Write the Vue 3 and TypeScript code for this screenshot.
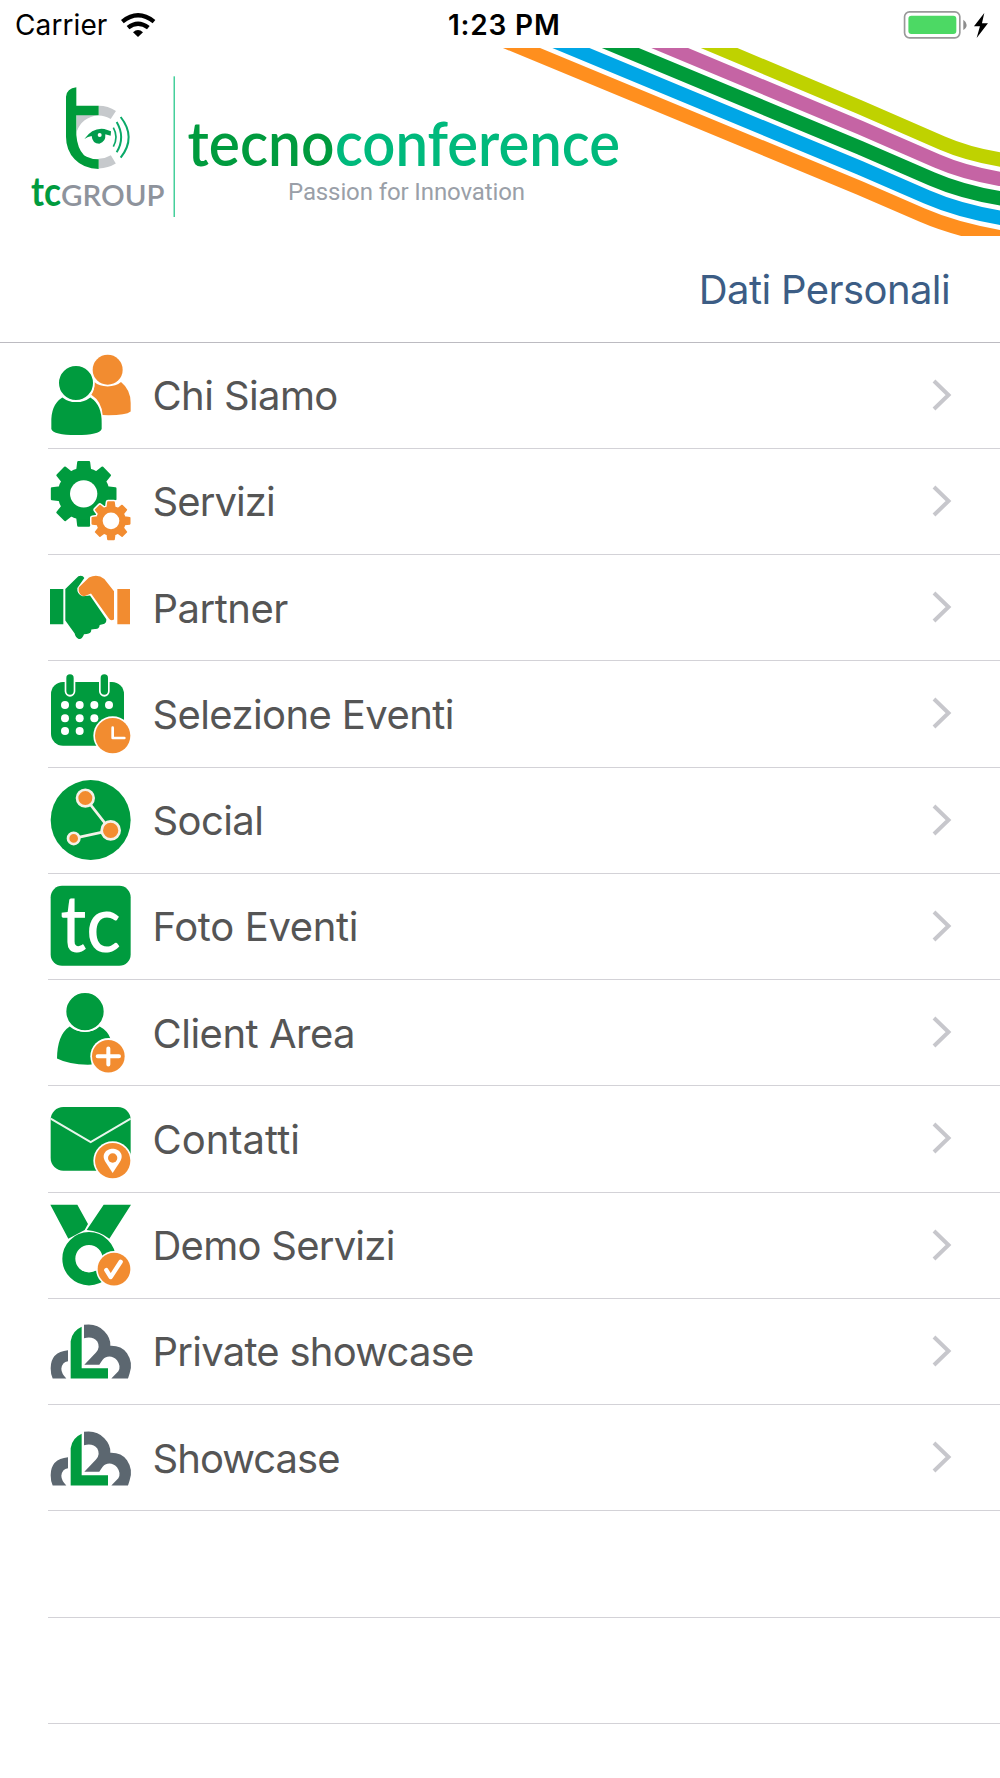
<script setup lang="ts">
interface MenuItem {
  label: string
  icon: string
  box: string
  spacing: number
}

const green = '#009b3e'
const orange = '#f28c30'
const slate = '#5c6770'

const items: MenuItem[] = [
  { label: 'Chi Siamo', icon: 'people', box: '54 6.75 258 318.75', spacing: -0.6 },
  { label: 'Servizi', icon: 'gears', box: '54 325.5 258 318.75', spacing: -0.9 },
  { label: 'Partner', icon: 'hands', box: '54 14.25 258 318.75', spacing: -0.5 },
  { label: 'Selezione Eventi', icon: 'calendar', box: '54 333 258 318.75', spacing: -0.6 },
  { label: 'Social', icon: 'social', box: '54 6.75 258 318.75', spacing: -0.6 },
  { label: 'Foto Eventi', icon: 'tile', box: '54 325.5 258 318.75', spacing: -0.35 },
  { label: 'Client Area', icon: 'client', box: '54 14.25 258 318.75', spacing: -0.5 },
  { label: 'Contatti', icon: 'mail', box: '54 333 258 318.75', spacing: 0 },
  { label: 'Demo Servizi', icon: 'medal', box: '54 6.75 258 318.75', spacing: -0.75 },
  { label: 'Private showcase', icon: 'cloud', box: '54 325.5 258 318.75', spacing: -0.75 },
  { label: 'Showcase', icon: 'cloud', box: '54 325.5 258 318.75', spacing: -0.95 },
]

// Each ribbon runs down to the right, then levels out at the edge.
const ribbons = ['#ff8f1e', '#00a6e6', '#009b3a', '#c564a4', '#bfd200'].map((color, i) => {
  const x0 = 521.5 + 49.4 * i
  const yMid = 188.1 - 20.2 * i
  const entry = (yMid - 48) / (860 - x0)
  const slope = 0.435
  const endSlope = 0.17
  const bend = 922 + 5 * i
  const yBend = yMid + slope * (bend - 860)
  const yEnd = 237.1 - 19.4 * i
  const t = (yEnd - yBend - endSlope * (1000 - bend)) / (slope - endSlope)
  return {
    color,
    d: `M${x0 - 40} ${48 - entry * 40}L860 ${yMid}L${bend} ${yBend}Q${bend + t} ${yBend + slope * t} 1000 ${yEnd}l20 ${20 * endSlope}`,
  }
})

function gear(cx: number, cy: number, outer: number, inner: number, tip: number, root: number): string {
  const points: string[] = []
  for (let i = 0; i < 8; i++) {
    const a = (i * Math.PI) / 4 - Math.PI / 2
    const corners: [number, number][] = [
      [inner, -root],
      [outer, -tip],
      [outer, tip],
      [inner, root],
    ]
    for (const [r, w] of corners) {
      const x = cx + Math.cos(a) * r - Math.sin(a) * w
      const y = cy + Math.sin(a) * r + Math.cos(a) * w
      points.push(`${x.toFixed(1)},${y.toFixed(1)}`)
    }
  }
  return points.join(' ')
}

const bigGear = gear(161, 463, 95, 70, 16, 19)
const smallGear = gear(243, 544, 56, 41, 9, 11)
const dots = [
  [105, 465], [149, 465], [193, 465], [237, 465],
  [105, 505], [149, 505], [193, 505],
  [105, 543], [149, 543],
]
</script>

<template>
  <main class="screen">
    <header class="status">
      <div class="carrier">
        <span>Carrier</span>
        <svg class="wifi" viewBox="362 34 104 76">
          <path d="M366 63Q413 25 461 63" fill="none" stroke="#000" stroke-width="13" />
          <path d="M383 81Q413 57 444 81" fill="none" stroke="#000" stroke-width="13" />
          <path d="M398 95Q413 81 428 95L413 109Z" />
        </svg>
      </div>
      <span class="time">1:23 PM</span>
      <svg class="battery" viewBox="788 28 260 88">
        <rect x="792.500" y="33.500" width="166" height="78" rx="15" fill="none" stroke="#999" stroke-width="5" />
        <rect x="804" y="45" width="144" height="55" rx="9" fill="#4cd964" />
        <path d="M969 57Q979 64 979 73T969 88Z" fill="#8d8d8d" />
        <path d="M1032 37L1001 77H1019L1009 112L1043 68H1025Z" />
      </svg>
    </header>

    <svg class="banner" viewBox="0 48 1000 188">
      <path v-for="r in ribbons" :key="r.color" :d="r.d" fill="none" :stroke="r.color" stroke-width="14.2" />
      <g transform="scale(.333333)">
        <path d="M230 345H296Q245 352 230 395Z" fill="#c6c9cc" />
        <path d="M296 332Q320 332 340 345" fill="none" stroke="#c6c9cc" stroke-width="29" />
        <path d="M296 491Q320 490 340 478" fill="none" stroke="#c6c9cc" stroke-width="29" />
        <path d="M198 290Q200 266 229 262V317H296V346H229V405Q232 445 252 466L260 470Q276 478 296 478V507Q250 506 224 478Q198 450 198 410Z" fill="#009b3a" />
        <path d="M253 417Q278 382 313 387L333 394L332 407L316 403Q318 426 298 431Q277 431 275 408Q264 410 253 417Z" fill="#009b4c" />
        <circle cx="299" cy="405" r="6" fill="#fff" />
        <g fill="none" stroke="#0aa968" stroke-width="5">
          <path d="M340 383Q356 411 340 440" />
          <path d="M350 366Q377 412 350 457" stroke-width="6" />
          <path d="M362 351Q410 412 362 473" stroke-width="6" />
        </g>
        <rect x="520.500" y="229" width="4.500" height="422" fill="#45cf9b" />
      </g>
      <g font-family="Lato, sans-serif">
        <text x="31" y="205.800" font-size="40" font-weight="700" fill="#009b3e" textLength="30" lengthAdjust="spacingAndGlyphs">tc</text>
        <text x="61" y="205.800" font-size="29.500" font-weight="600" fill="#8e939c" textLength="103.500" lengthAdjust="spacingAndGlyphs">GROUP</text>
        <text x="187.500" y="165.500" font-size="62" font-weight="600" fill="#009b3e" textLength="147" lengthAdjust="spacingAndGlyphs">tecno</text>
        <text x="335" y="165.500" font-size="62" font-weight="600" fill="#00b97c" textLength="285" lengthAdjust="spacingAndGlyphs">conference</text>
      </g>
      <text x="288" y="200" font-family="Roboto, sans-serif" font-size="24" fill="#9a9fa8" textLength="237">Passion for Innovation</text>
    </svg>

    <div class="account"><span>Dati Personali</span></div>

    <ul class="menu">
      <li v-for="item in items" :key="item.label" class="row">
        <svg class="icon" :viewBox="item.box">
          <g v-if="item.icon === 'people'">
            <g :fill="orange">
              <path d="M193 127Q208 140 233 140T273 127Q302 150 302 190V215Q286 228 218 226Q215 185 184 165Q195 150 193 127Z" />
              <circle cx="233" cy="90" r="45" />
            </g>
            <g :fill="green">
              <path d="M97 173Q115 187 139 187T181 173Q216 195 215 250V268Q208 286 139 286T64 268V250Q62 195 97 173Z" />
              <circle cx="138" cy="130" r="53.500" stroke="#fff" stroke-width="5" />
            </g>
          </g>
          <g v-else-if="item.icon === 'gears'">
            <polygon :points="bigGear" :fill="green" :stroke="green" stroke-width="7" stroke-linejoin="round" />
            <circle cx="161" cy="463" r="78" :fill="green" />
            <circle cx="161" cy="463" r="41" fill="#fff" />
            <polygon :points="smallGear" fill="#fff" stroke="#fff" stroke-width="14" stroke-linejoin="round" />
            <polygon :points="smallGear" :fill="orange" :stroke="orange" stroke-width="5" stroke-linejoin="round" />
            <circle cx="243" cy="544" r="25" fill="#fff" />
          </g>
          <g v-else-if="item.icon === 'hands'">
            <path d="M60 116H100V222H60ZM106 116L145 78Q158 74 163 83L142 113Q140 131 158 138L180 136L229 207Q230 220 218 222L209 224Q208 237 195 236L184 238Q184 251 170 251L162 252Q156 269 146 266Q136 262 134 250L106 211Z" :fill="green" />
            <path d="M262 116H300V222H262ZM146 112L177 82Q202 70 223 86L252 123V208Q242 214 236 204L183 130L163 138Q150 136 146 122Z" :fill="orange" />
          </g>
          <g v-else-if="item.icon === 'calendar'">
            <rect x="63" y="396" width="219" height="191" rx="36" :fill="green" />
            <g stroke-linecap="round" stroke-width="32" stroke="#fff">
              <path d="M120 384V424M223 384V424" />
              <path d="M120 384V423M223 384V423" :stroke="green" stroke-width="22" />
            </g>
            <circle v-for="([x, y], i) in dots" :key="i" :cx="x" :cy="y" r="12" fill="#fff" />
            <circle cx="248" cy="557" r="58" fill="#fff" />
            <circle cx="248" cy="557" r="53" :fill="orange" />
            <path d="M248 533V564H283" fill="none" stroke="#fff" stroke-width="8" stroke-linecap="round" stroke-linejoin="round" />
          </g>
          <g v-else-if="item.icon === 'social'" stroke="#f4f1e8">
            <circle cx="182" cy="166" r="120" :fill="green" stroke="none" />
            <path d="M166 100L242 197L131 221" fill="none" stroke-width="8" />
            <g :fill="orange" stroke-width="8">
              <circle cx="166" cy="100" r="25" />
              <circle cx="242" cy="197" r="27" />
              <circle cx="131" cy="221" r="17" />
            </g>
          </g>
          <g v-else-if="item.icon === 'tile'">
            <rect x="62" y="364" width="240" height="240" rx="34" :fill="green" />
            <text x="91" y="562" font-family="Lato, sans-serif" font-size="236" font-weight="500" fill="#fff" textLength="182" lengthAdjust="spacingAndGlyphs">tc</text>
          </g>
          <g v-else-if="item.icon === 'client'">
            <path d="M119 154Q138 170 165 170T209 154Q234 167 242 192Q180 200 185 268Q120 270 81 250Q82 178 119 154Z" :fill="green" />
            <circle cx="165" cy="109" r="58.500" :fill="green" stroke="#fff" stroke-width="5" />
            <circle cx="236" cy="243" r="55" fill="#fff" />
            <circle cx="235" cy="243" r="49" :fill="orange" />
            <path d="M235 220V268M203 243H267" stroke="#fff" stroke-width="12" stroke-linecap="round" />
          </g>
          <g v-else-if="item.icon === 'mail'">
            <rect x="62" y="396" width="240" height="191" rx="38" :fill="green" />
            <path d="M62 431L182 501L302 431" fill="none" stroke="#e8f6ec" stroke-width="6" />
            <circle cx="248" cy="557" r="58" fill="#fff" />
            <circle cx="248" cy="557" r="53" :fill="orange" />
            <path d="M248 594L226 560C212 537 230 521 248 521S284 537 270 560Z" fill="#fff" />
            <circle cx="248" cy="549" r="14" :fill="orange" />
          </g>
          <g v-else-if="item.icon === 'medal'">
            <path d="M61 45H142L174 103L164 121L115 147ZM221 45H303L238 147Q210 125 170 121Z" :fill="green" />
            <circle cx="177" cy="207" r="60.500" fill="none" :stroke="green" stroke-width="39" />
            <circle cx="252" cy="238" r="54" fill="#fff" />
            <circle cx="252" cy="238" r="49" :fill="orange" />
            <path d="M229 241L242 262L272 216" fill="none" stroke="#fff" stroke-width="13" stroke-linecap="round" stroke-linejoin="round" />
          </g>
          <g v-else>
            <g :fill="slate">
              <path d="M114 482Q62 487 62 536Q62 555 68 567H109Q94 552 94 538Q96 517 114 515Z" />
              <path d="M162 406Q200 400 223 425Q243 446 241 469Q274 468 291 491Q310 519 299 551L294 567H244L265 545Q274 530 261 512Q245 496 226 504Q219 507 208 526H163L198 489Q212 474 202 456Q189 439 162 446Z" />
            </g>
            <path d="M122 567V455Q126 425 155 412V536H234V567Z" :fill="green" />
          </g>
        </svg>
        <span class="label" :style="{ letterSpacing: item.spacing + 'px' }">{{ item.label }}</span>
        <svg class="chevron" viewBox="0 0 20 32">
          <path d="M2 2L16.500 16L2 30" fill="none" stroke="#c7c7cc" stroke-width="4" />
        </svg>
      </li>
      <li v-for="n in 3" :key="n" class="row" />
    </ul>
  </main>
</template>

<style>
body {
  margin: 0;
  background: #fff;
  overflow: hidden;
}
</style>

<style scoped>
.screen {
  width: 1000px;
  height: 1778px;
  overflow: hidden;
  background: #fff;
  font-family: Inter, sans-serif;
}

.status {
  display: grid;
  grid-template-columns: 1fr auto 1fr;
  align-items: center;
  box-sizing: border-box;
  height: 48px;
  padding: 2px 10.5px 0 15px;
  font-size: 28px;
  line-height: 46px;
  color: #000;
}

.carrier {
  display: flex;
  align-items: center;
  gap: 13.5px;
  letter-spacing: 0.1px;
}

.wifi {
  width: 34.7px;
  height: 25.3px;
}

.time {
  padding-left: 4px;
  font-weight: 600;
  letter-spacing: 0.8px;
}

.battery {
  justify-self: end;
  width: 86.7px;
  height: 29.3px;
}

.banner {
  display: block;
  width: 1000px;
  height: 188px;
}

.account {
  display: flex;
  align-items: center;
  justify-content: flex-end;
  box-sizing: border-box;
  height: 106.6px;
  padding: 1px 50px 0 0;
  border-bottom: 1px solid #bcbbc1;
  font-size: 40px;
  letter-spacing: -0.6px;
  color: #3c5d85;
}

.menu {
  margin: 0;
  padding: 0 0 0 48px;
  list-style: none;
}

.row {
  display: flex;
  align-items: center;
  box-sizing: border-box;
  height: 106.25px;
  padding-right: 48px;
  border-bottom: 1px solid #d3d2d7;
}

.icon {
  flex: none;
  width: 86px;
  height: 106.25px;
}

.label {
  flex: 1;
  margin-left: 18.5px;
  padding-top: 2px;
  font-size: 40px;
  line-height: 48px;
  white-space: nowrap;
  color: #555;
}

.chevron {
  flex: none;
  width: 20px;
  height: 32px;
  margin-bottom: 1px;
}
</style>
